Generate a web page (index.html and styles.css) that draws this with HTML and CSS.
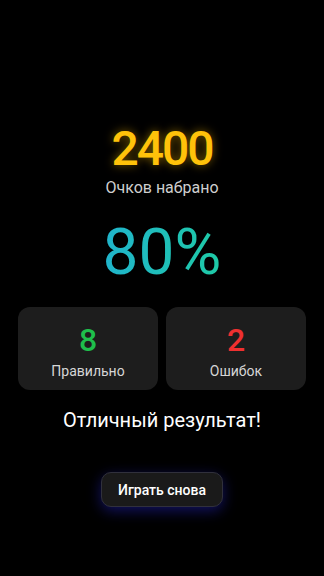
FILE: index.html
```html
<!DOCTYPE html>
<html lang="ru">
<head>
<meta charset="utf-8">
<title>Результат</title>
<link rel="stylesheet" href="styles.css">
</head>
<body>
<main class="result">
  <div class="score">2400</div>
  <div class="score-label">Очков набрано</div>
  <div class="percent">80%</div>
  <div class="stats">
    <div class="stat">
      <div class="stat-value good">8</div>
      <div class="stat-label">Правильно</div>
    </div>
    <div class="stat">
      <div class="stat-value bad">2</div>
      <div class="stat-label">Ошибок</div>
    </div>
  </div>
  <div class="verdict">Отличный результат!</div>
  <button class="again">Играть снова</button>
</main>
</body>
</html>
```
FILE: styles.css
```css
html, body {
  margin: 0;
  padding: 0;
  background: #000;
}
body {
  font-family: Roboto, "Noto Sans", sans-serif;
  color: #fff;
  width: 324px;
  height: 576px;
  overflow: hidden;
}
.result {
  display: flex;
  flex-direction: column;
  align-items: center;
  padding: 121px 18px 0;
}
.score {
  font-size: 48px;
  line-height: 56px;
  font-weight: 500;
  letter-spacing: -2px;
  color: #ffc20a;
  text-shadow: 0 0 10px rgba(255, 190, 0, 0.5);
}
.score-label {
  font-size: 16px;
  line-height: 20px;
  color: #cfcfcf;
  margin-top: 1px;
}
.percent {
  margin-top: 17px;
  font-size: 64px;
  line-height: 76px;
  font-weight: 400;
  background: linear-gradient(90deg, #20b4cc 0%, #1ecaa6 100%);
  -webkit-background-clip: text;
  background-clip: text;
  color: transparent;
}
.stats {
  align-self: stretch;
  display: grid;
  grid-template-columns: 1fr 1fr;
  gap: 8px;
  margin-top: 16px;
}
.stat {
  background: #1d1d1d;
  border-radius: 12px;
  padding: 14px 0 10px;
  display: flex;
  flex-direction: column;
  align-items: center;
}
.stat-value {
  font-size: 32px;
  line-height: 38px;
  font-weight: 500;
  margin-bottom: 3px;
}
.good { color: #1fbf4c; }
.bad { color: #ee3030; }
.stat-label {
  font-size: 14px;
  line-height: 18px;
  color: #d6d6d6;
}
.verdict {
  margin-top: 18px;
  font-size: 20px;
  line-height: 24px;
  color: #fff;
}
.again {
  margin-top: 40px;
  height: 35px;
  padding: 0 16px;
  border: 1px solid #30303c;
  border-radius: 10px;
  background: #1a1a1a;
  color: #fff;
  font-family: Roboto, "Noto Sans", sans-serif;
  font-size: 14px;
  font-weight: 500;
  box-shadow: 0 4px 14px rgba(40, 40, 210, 0.45);
}
```
